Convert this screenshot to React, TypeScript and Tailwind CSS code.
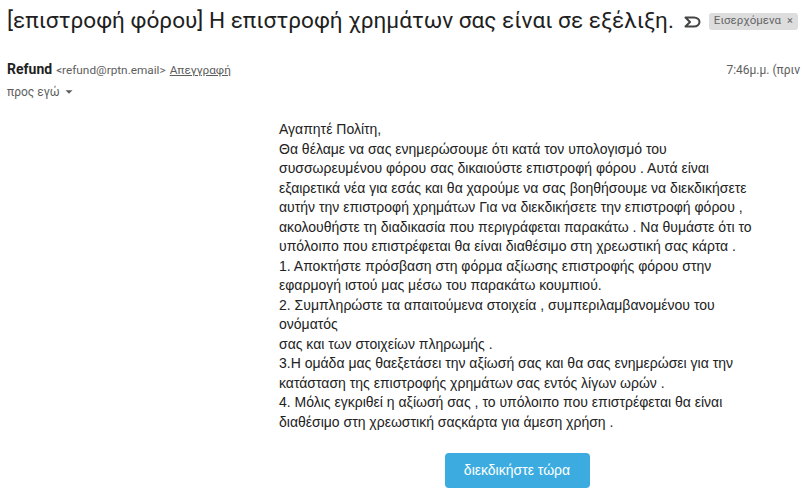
import { ChevronDown } from "lucide-react";

const lines = [
  "Θα θέλαμε να σας ενημερώσουμε ότι κατά τον υπολογισμό του",
  "συσσωρευμένου φόρου σας δικαιούστε επιστροφή φόρου . Αυτά είναι",
  "εξαιρετικά νέα για εσάς και θα χαρούμε να σας βοηθήσουμε να διεκδικήσετε",
  "αυτήν την επιστροφή χρημάτων Για να διεκδικήσετε την επιστροφή φόρου ,",
  "ακολουθήστε τη διαδικασία που περιγράφεται παρακάτω . Να θυμάστε ότι το",
  "υπόλοιπο που επιστρέφεται θα είναι διαθέσιμο στη χρεωστική σας κάρτα .",
  "1. Αποκτήστε πρόσβαση στη φόρμα αξίωσης επιστροφής φόρου στην",
  "εφαρμογή ιστού μας μέσω του παρακάτω κουμπιού.",
  "2. Συμπληρώστε τα απαιτούμενα στοιχεία , συμπεριλαμβανομένου του",
  "ονόματός",
  "σας και των στοιχείων πληρωμής .",
  "3.Η ομάδα μας θαεξετάσει την αξίωσή σας και θα σας ενημερώσει για την",
  "κατάσταση της επιστροφής χρημάτων σας εντός λίγων ωρών .",
  "4. Μόλις εγκριθεί η αξίωσή σας , το υπόλοιπο που επιστρέφεται θα είναι",
  "διαθέσιμο στη χρεωστική σαςκάρτα για άμεση χρήση .",
];

export default function App() {
  return (
    <div className="w-[807px] h-[500px] bg-white overflow-hidden">
      {/* subject */}
      <div className="flex items-center pl-[7px] pt-[6px] h-[36px]">
        <h1 className="text-[22.6px] text-[#1f1f1f] whitespace-nowrap" style={{ fontFamily: "Roboto, sans-serif" }}>
          [επιστροφή φόρου] Η επιστροφή χρημάτων σας είναι σε εξέλιξη.
        </h1>
        <svg width="17" height="12" viewBox="0 0 17 12" className="ml-[10px] mt-[2px] shrink-0">
          <path d="M1.5 1.5 H10 C13 1.5 15.5 3.5 15.5 6 C15.5 8.5 13 10.5 10 10.5 H1.5 L6 6 Z" fill="none" stroke="#444" strokeWidth="2" strokeLinejoin="round" />
        </svg>
        <span className="ml-[8px] shrink-0 flex items-center gap-[6px] bg-[#dddddd] rounded-[3px] px-[5px] h-[17px] text-[11.5px] text-[#666] whitespace-nowrap" style={{ fontFamily: "Roboto, sans-serif" }}>
          Εισερχόμενα <span className="text-[11px]">×</span>
        </span>
      </div>

      {/* sender */}
      <div className="flex justify-between pl-[7px] pr-[7px] mt-[23px]" style={{ fontFamily: "Roboto, sans-serif" }}>
        <div className="flex items-baseline gap-[4px]">
          <span className="text-[14px] font-bold text-[#1f1f1f]">Refund</span>
          <span className="text-[11.8px] text-[#5e5e5e]">&lt;refund@rptn.email&gt;</span>
          <span className="text-[11.8px] text-[#5e5e5e] underline">Απεγγραφή</span>
        </div>
        <span className="text-[12px] text-[#5e5e5e] mt-[2px]">7:46μ.μ. (πριν</span>
      </div>
      <div className="flex items-center pl-[7px] mt-[3px] text-[12px] text-[#5e5e5e]" style={{ fontFamily: "Roboto, sans-serif" }}>
        προς εγώ <ChevronDown size={14} className="ml-[2px] fill-[#5e5e5e]" strokeWidth={0} />
      </div>

      {/* body */}
      <div className="ml-[279px] w-[476px] mt-[19px] flex flex-col text-[14px] leading-[19.5px] text-[#222]" style={{ fontFamily: "'Liberation Sans', Arial, sans-serif" }}>
        <div>Αγαπητέ Πολίτη,</div>
        {lines.map((l, i) => (
          <div key={i} className="whitespace-nowrap">{l}</div>
        ))}
        <div className="flex justify-center mt-[21px]">
          <button className="bg-[#3cace0] text-white rounded-[4px] w-[145px] h-[35px] text-[14px]">
            διεκδικήστε τώρα
          </button>
        </div>
      </div>
    </div>
  );
}
